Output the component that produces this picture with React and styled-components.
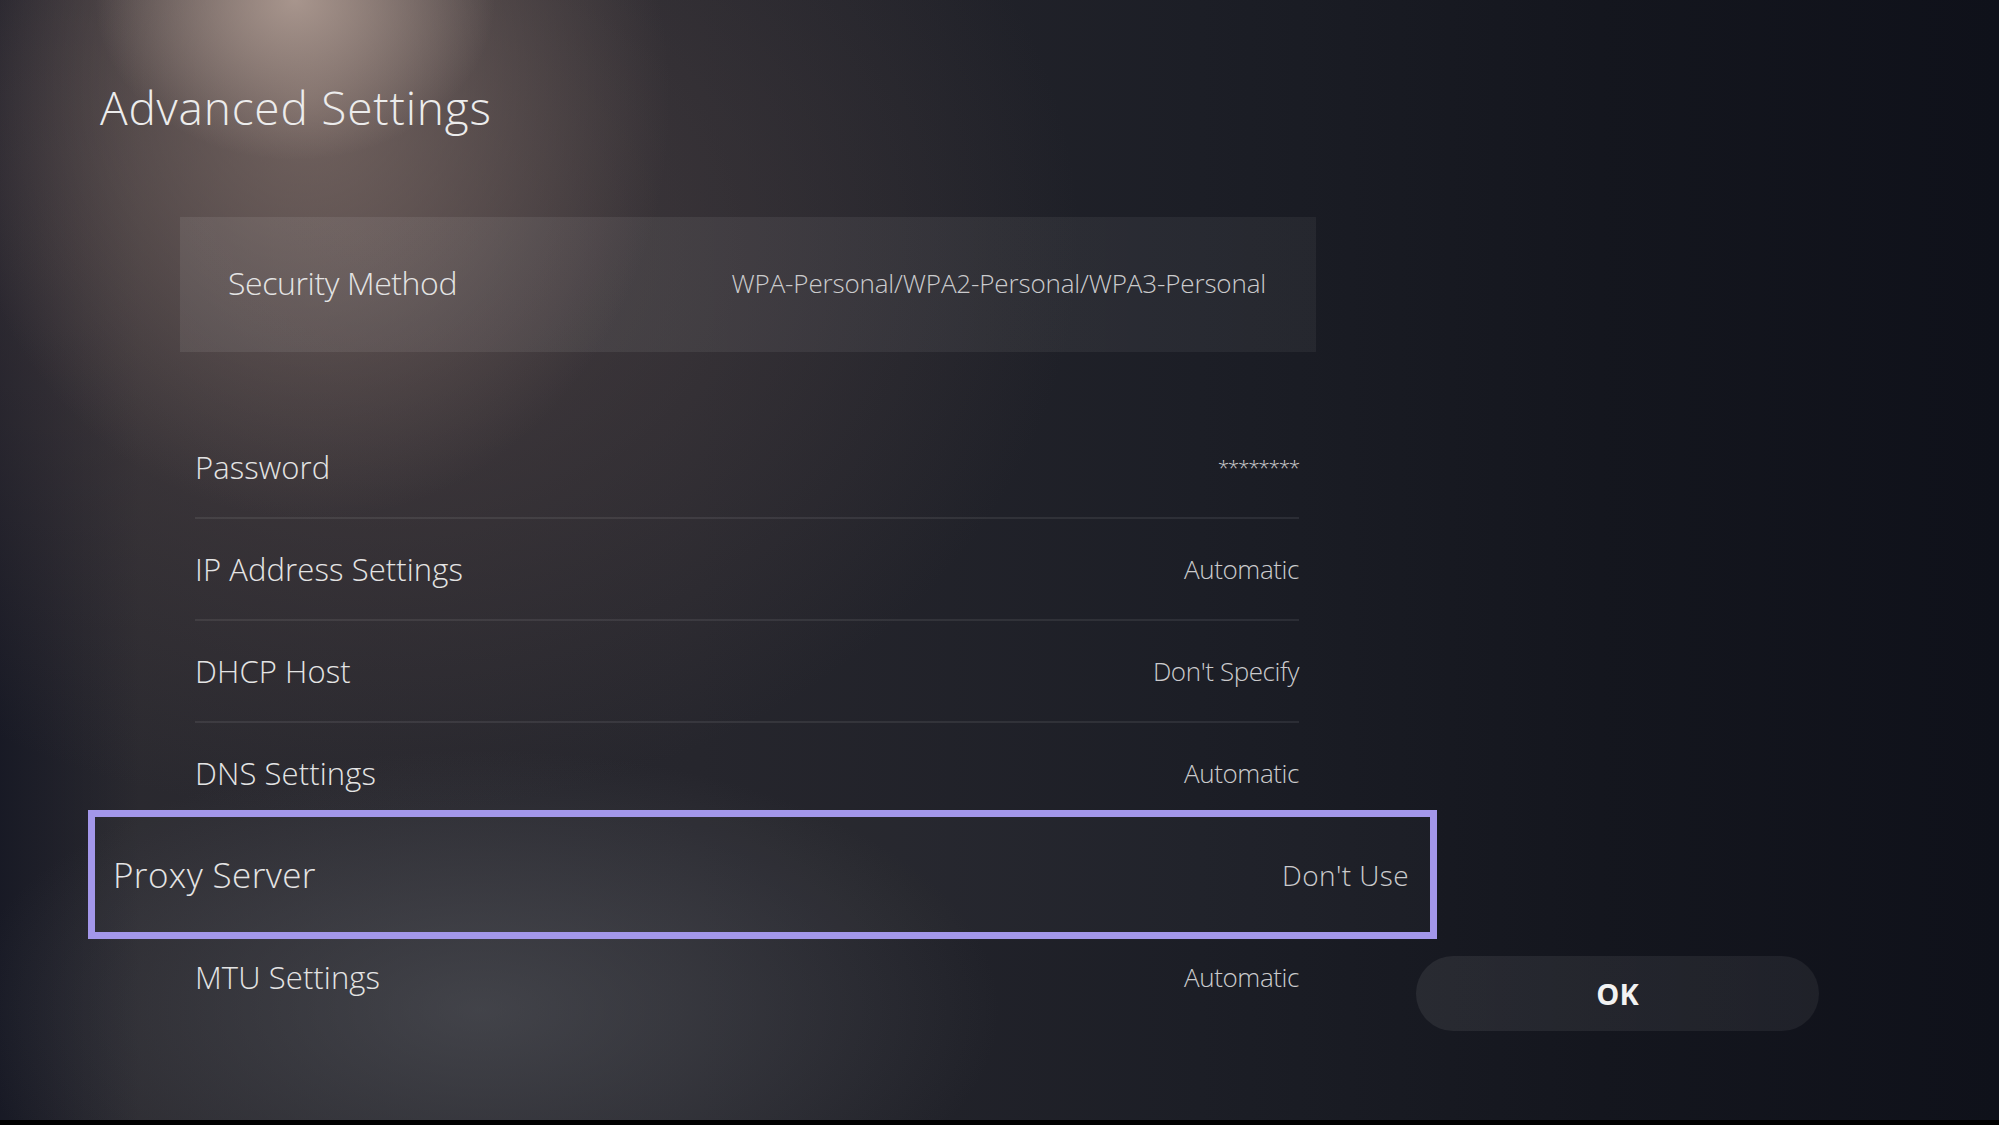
import React from 'react';
import styled, { createGlobalStyle } from 'styled-components';

const GlobalStyle = createGlobalStyle`
  html, body {
    margin: 0;
    padding: 0;
    background: #16181f;
  }
  * {
    box-sizing: border-box;
  }
`;

const Screen = styled.div`
  width: 1999px;
  height: 1125px;
  overflow: hidden;
  padding-top: 84px;
  font-family: 'Open Sans', 'Noto Sans', sans-serif;
  font-weight: 300;
  color: #e6e6e6;
  background:
    linear-gradient(to top, #000 5px, transparent 5px),
    radial-gradient(ellipse 200px 160px at 295px 0px, rgba(185, 165, 155, 0.8), transparent),
    radial-gradient(ellipse 480px 560px at 310px 100px, rgba(130, 112, 106, 0.75), transparent 75%),
    radial-gradient(ellipse 900px 720px at 360px 240px, rgba(88, 74, 74, 0.6), transparent 80%),
    radial-gradient(ellipse 520px 260px at 480px 1010px, rgba(88, 90, 96, 0.55), transparent),
    linear-gradient(90deg, rgba(22, 24, 36, 0.9) 0%, transparent 7%),
    linear-gradient(90deg, #2b2a30 0%, #26262d 35%, #1c1e26 60%, #14161e 80%, #0f111a 100%);
`;

const Title = styled.h1`
  margin: 0;
  padding-left: 100px;
  font-size: 46px;
  line-height: 1;
  font-weight: 300;
  color: #ececec;
  letter-spacing: 0.8px;
`;

const Main = styled.div`
  display: flex;
  margin-top: 87px;
  padding-left: 180px;
`;

const List = styled.div`
  width: 1136px;
  display: flex;
  flex-direction: column;
`;

const SecurityPanel = styled.div`
  height: 135px;
  margin-bottom: 65px;
  padding: 0 50px 4px 48px;
  display: flex;
  align-items: center;
  justify-content: space-between;
  background: linear-gradient(90deg, rgba(255, 255, 255, 0.08), rgba(255, 255, 255, 0.05));
`;

const Row = styled.div`
  height: 102px;
  margin: 0 17px 0 15px;
  display: flex;
  align-items: center;
  justify-content: space-between;
  border-bottom: 2px solid ${p => (p.$divided ? 'rgba(255, 255, 255, 0.08)' : 'transparent')};
`;

const FocusRow = styled.div`
  position: relative;
  height: 129px;
  margin: -15px -121px -12px -92px;
  padding: 0 21px 0 18px;
  display: flex;
  align-items: center;
  justify-content: space-between;
  border: 7px solid #a397ea;
  background: rgba(255, 255, 255, 0.025);
`;

const Label = styled.span`
  font-size: ${p => p.$size || 31}px;
  color: #e4e4e4;
  letter-spacing: ${p => p.$spacing ?? 0.1}px;
  white-space: nowrap;
`;

const Value = styled.span`
  font-size: ${p => p.$size || 26}px;
  color: #cbcbcd;
  letter-spacing: ${p => p.$spacing ?? -0.4}px;
  white-space: nowrap;
`;

const Masked = styled.span`
  font-size: 21px;
  color: #cbcbcd;
  letter-spacing: -1.4px;
`;

const Side = styled.div`
  display: flex;
  flex-direction: column;
  justify-content: flex-end;
  padding-left: 100px;
`;

const OkButton = styled.button`
  width: 403px;
  height: 75px;
  margin-bottom: -2px;
  border: none;
  border-radius: 38px;
  background: linear-gradient(90deg, rgba(255, 255, 255, 0.075), rgba(255, 255, 255, 0.06));
  color: #f2f2f2;
  font-family: 'Open Sans', 'Noto Sans', sans-serif;
  font-weight: 700;
  font-size: 29px;
  letter-spacing: 0px;
  cursor: pointer;
`;

const rows = [
  { label: 'Password', value: '********', masked: true, divided: true },
  { label: 'IP Address Settings', value: 'Automatic', divided: true },
  { label: 'DHCP Host', value: "Don't Specify", divided: true },
  { label: 'DNS Settings', value: 'Automatic' },
  { label: 'Proxy Server', value: "Don't Use", focused: true },
  { label: 'MTU Settings', value: 'Automatic' },
];

export default function App() {
  return (
    <Screen>
      <GlobalStyle />
      <Title>Advanced Settings</Title>
      <Main>
        <List>
          <SecurityPanel>
            <Label $size={32} $spacing={-0.4}>Security Method</Label>
            <Value $spacing={-0.15}>WPA-Personal/WPA2-Personal/WPA3-Personal</Value>
          </SecurityPanel>
          {rows.map(r =>
            r.focused ? (
              <FocusRow key={r.label}>
                <Label $size={35} $spacing={0.4}>{r.label}</Label>
                <Value $size={28} $spacing={0.4}>{r.value}</Value>
              </FocusRow>
            ) : (
              <Row key={r.label} $divided={r.divided}>
                <Label>{r.label}</Label>
                {r.masked ? <Masked>{r.value}</Masked> : <Value>{r.value}</Value>}
              </Row>
            )
          )}
        </List>
        <Side>
          <OkButton>OK</OkButton>
        </Side>
      </Main>
    </Screen>
  );
}
